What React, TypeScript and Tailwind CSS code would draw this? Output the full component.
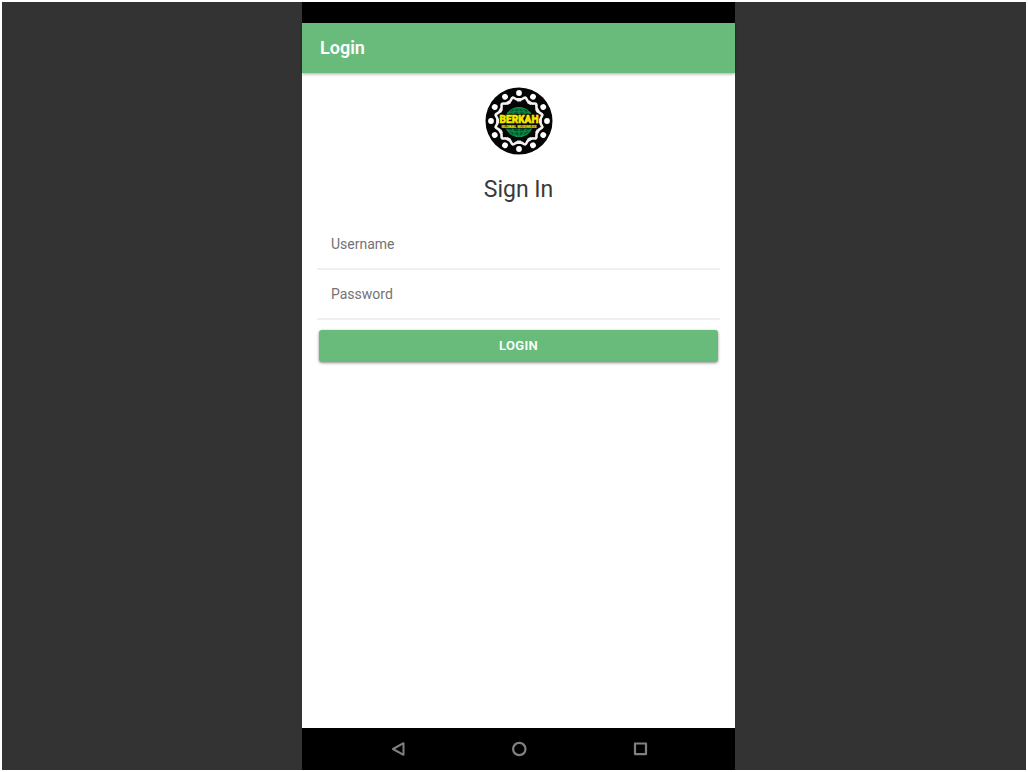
import { useId } from "react";

const figures = Array.from({ length: 12 }, (_, i) => i * 30);

function Logo() {
  return (
    <svg viewBox="-34 -34 68 68" className="size-[68px]" role="img" aria-label="Berkah Global Business">
      <circle r="33.5" fill="#050505" />
      {figures.map((angle) => (
        <g key={angle} transform={`rotate(${angle})`}>
          <circle cy="-28" r="2.9" fill="#fff" />
          <path
            d="M-6.2 -23.2 C-4.4 -23.6 -3.8 -21.6 -2 -21.6 H2 C3.8 -21.6 4.4 -23.6 6.2 -23.2"
            fill="none"
            stroke="#f2f2f2"
            strokeWidth="2.6"
            strokeLinecap="round"
          />
          <path d="M-2.8 -22 L-1.8 -19.6 H1.8 L2.8 -22 Z" fill="#f2f2f2" />
        </g>
      ))}
      <g fill="none" stroke="#06934a" strokeWidth="1.2">
        <ellipse cy="1" rx="14" ry="14.5" fill="#04552a" />
        <ellipse cy="1" rx="7.5" ry="14.5" />
        <path d="M0 -13.5 V15.5 M-11.5 -8 Q0 -11 11.5 -8 M-12 9 Q0 13 12 9" />
      </g>
      <path d="M-20 -7 H20 V3 H18 V7.5 H-18 V3 H-20 Z" fill="#0b0e02" />
      <text
        y="2"
        textAnchor="middle"
        fill="#f5e800"
        stroke="#f5e800"
        strokeWidth="0.5"
        fontFamily="Roboto, sans-serif"
        fontSize="10"
        fontWeight="900"
      >
        BERKAH
      </text>
      <text
        y="6.7"
        textAnchor="middle"
        fill="#e0d400"
        stroke="#e0d400"
        strokeWidth="0.2"
        fontFamily="Roboto, sans-serif"
        fontSize="4"
        fontWeight="900"
      >
        GLOBAL BUSINESS
      </text>
    </svg>
  );
}

function Field({ label, type }: { label: string; type: string }) {
  const id = useId();
  return (
    <div className="flex h-[50px] items-center border-b-2 border-[#f0f0f0] px-3.5">
      <label htmlFor={id} className="text-sm text-[#737373]">
        {label}
      </label>
      <input id={id} type={type} className="h-full min-w-0 flex-1 bg-transparent px-2 text-sm text-[#333] outline-none" />
    </div>
  );
}

function NavBar() {
  return (
    <nav className="flex h-[42px] items-center justify-around bg-black px-[35px] text-[#808080]">
      <button type="button" aria-label="Back">
        <svg viewBox="0 0 16 16" className="size-4" fill="none" stroke="currentColor" strokeWidth="2" strokeLinejoin="round">
          <path d="M13.5 2.2 V13.8 L3 8 Z" />
        </svg>
      </button>
      <button type="button" aria-label="Home">
        <svg viewBox="0 0 16 16" className="size-4" fill="none" stroke="currentColor" strokeWidth="2.2">
          <circle cx="8.3" cy="8" r="6.2" />
        </svg>
      </button>
      <button type="button" aria-label="Recent apps">
        <svg viewBox="0 0 16 16" className="size-4" fill="none" stroke="currentColor" strokeWidth="2.2" strokeLinejoin="round">
          <rect x="3" y="2.5" width="11" height="10.6" />
        </svg>
      </button>
    </nav>
  );
}

export default function App() {
  return (
    <div className="flex h-screen justify-center border-2 border-white bg-[#333] pl-[9px] font-['Roboto',sans-serif]">
      <div className="flex w-full max-w-[433px] flex-col bg-white">
        <div className="h-[21px] bg-black" />
        <header className="flex h-[50px] items-center bg-[#69bb7c] px-[18px] shadow-[0_1px_3px_rgba(0,0,0,0.35)]">
          <h1 className="text-lg font-semibold text-white">Login</h1>
        </header>
        <main className="flex flex-1 flex-col px-[15px] pt-3.5">
          <div className="flex justify-center">
            <Logo />
          </div>
          <h2 className="mt-[19px] text-center text-[23px] leading-8 text-[#3a3a3a]">Sign In</h2>
          <form className="mt-3.5" onSubmit={(e) => e.preventDefault()}>
            <Field label="Username" type="text" />
            <Field label="Password" type="password" />
            <div className="px-0.5 pt-2.5">
              <button
                type="submit"
                className="h-8 w-full rounded-[3px] bg-[#69bb7c] text-[13px] font-semibold tracking-wide text-white shadow-[0_1px_3px_rgba(0,0,0,0.45)]"
              >
                LOGIN
              </button>
            </div>
          </form>
        </main>
        <NavBar />
      </div>
    </div>
  );
}
